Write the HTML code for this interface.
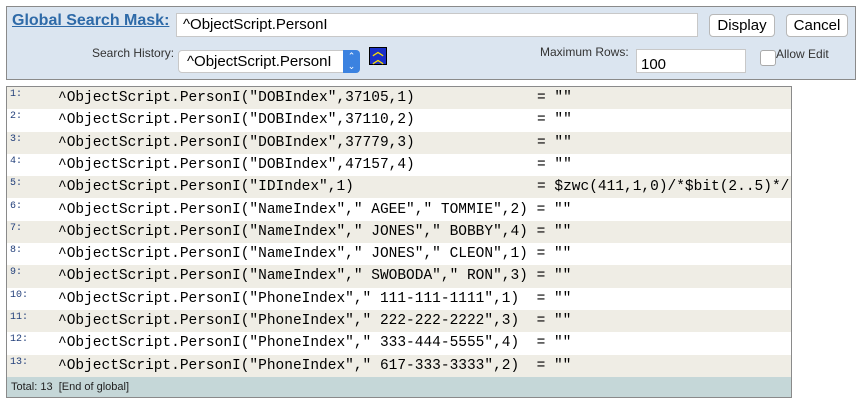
<!DOCTYPE html>
<html><head><style>
body{margin:0;width:864px;height:412px;background:#fff;font-family:"Liberation Sans",sans-serif;position:relative;overflow:hidden}
.a{position:absolute}
.panel{left:6px;top:6px;width:848px;height:72px;background:#dbe5f0;border:1px solid #8a8a8a}
.inp{background:#fff;border:1px solid #c8c8c8;font-size:15px;box-sizing:border-box;padding-left:6px;line-height:22px}
.btn{background:#fff;border:1px solid #b8b8b8;border-radius:4px;font-size:15px;text-align:center;line-height:21px;box-sizing:border-box}
.tbl{left:6px;top:86px;width:786px;height:312px;border:1px solid #8a8a8a;box-sizing:border-box}
.row{position:absolute;left:0;width:784px;height:22.3px;font-family:"Liberation Mono",monospace;font-size:14.5px;line-height:22px}
.row.o{background:#efede5}
.n{position:absolute;left:3px;top:-3px;font-size:10px;color:#223f7a}
.c{position:absolute;left:51px;white-space:pre}
.e{position:absolute;left:530px;white-space:pre}
</style></head><body>
<div class="a panel"></div>
<div class="a" style="left:12px;top:12px;font-size:16px;font-weight:bold;color:#2e6aa8;text-decoration:underline">Global Search Mask:</div>
<div class="a inp" style="left:176px;top:13px;width:522px;height:24px">^ObjectScript.PersonI</div>
<div class="a btn" style="left:709px;top:14px;width:66px;height:23px">Display</div>
<div class="a btn" style="left:786px;top:14px;width:62px;height:23px">Cancel</div>
<div class="a" style="left:92px;top:46px;font-size:12px;color:#333">Search History:</div>
<div class="a inp" style="left:178px;top:50px;width:182px;height:23px;border-radius:4px;padding-left:8px">^ObjectScript.PersonI</div>
<div class="a" style="left:343px;top:50px;width:17px;height:23px;background:#3b82e0;border-radius:0 4px 4px 0;color:#fff;font-size:9px;text-align:center;line-height:10px;padding-top:1px;box-sizing:border-box">⌃<br>⌄</div>
<div class="a" style="left:369px;top:47px;width:18px;height:18px;background:#1a2fc8;border:1px solid #000;box-sizing:border-box;color:#ffe000;font-size:11px;text-align:center;line-height:8px;font-weight:bold">︿<br>︿</div>
<div class="a" style="left:540px;top:45px;font-size:12px;color:#333">Maximum Rows:</div>
<div class="a inp" style="left:636px;top:49px;width:110px;height:24px;padding-top:4px;padding-left:4px">100</div>
<div class="a" style="left:760px;top:50px;width:14px;height:14px;background:#fff;border:1px solid #aaa;border-radius:3px"></div>
<div class="a" style="left:776px;top:47px;font-size:12px;color:#333">Allow Edit</div>
<div class="a tbl">
<div class="row o" style="top:0"><span class="n">1:</span><span class="c">^ObjectScript.PersonI("DOBIndex",37105,1)</span><span class="e">= ""</span></div>
<div class="row" style="top:22.3px"><span class="n">2:</span><span class="c">^ObjectScript.PersonI("DOBIndex",37110,2)</span><span class="e">= ""</span></div>
<div class="row o" style="top:44.6px"><span class="n">3:</span><span class="c">^ObjectScript.PersonI("DOBIndex",37779,3)</span><span class="e">= ""</span></div>
<div class="row" style="top:66.9px"><span class="n">4:</span><span class="c">^ObjectScript.PersonI("DOBIndex",47157,4)</span><span class="e">= ""</span></div>
<div class="row o" style="top:89.2px"><span class="n">5:</span><span class="c">^ObjectScript.PersonI("IDIndex",1)</span><span class="e">= $zwc(411,1,0)/*$bit(2..5)*/</span></div>
<div class="row" style="top:111.5px"><span class="n">6:</span><span class="c">^ObjectScript.PersonI("NameIndex"," AGEE"," TOMMIE",2) = ""</span></div>
<div class="row o" style="top:133.8px"><span class="n">7:</span><span class="c">^ObjectScript.PersonI("NameIndex"," JONES"," BOBBY",4) = ""</span></div>
<div class="row" style="top:156.1px"><span class="n">8:</span><span class="c">^ObjectScript.PersonI("NameIndex"," JONES"," CLEON",1) = ""</span></div>
<div class="row o" style="top:178.4px"><span class="n">9:</span><span class="c">^ObjectScript.PersonI("NameIndex"," SWOBODA"," RON",3) = ""</span></div>
<div class="row" style="top:200.7px"><span class="n">10:</span><span class="c">^ObjectScript.PersonI("PhoneIndex"," 111-111-1111",1)  = ""</span></div>
<div class="row o" style="top:223px"><span class="n">11:</span><span class="c">^ObjectScript.PersonI("PhoneIndex"," 222-222-2222",3)  = ""</span></div>
<div class="row" style="top:245.3px"><span class="n">12:</span><span class="c">^ObjectScript.PersonI("PhoneIndex"," 333-444-5555",4)  = ""</span></div>
<div class="row o" style="top:267.6px"><span class="n">13:</span><span class="c">^ObjectScript.PersonI("PhoneIndex"," 617-333-3333",2)  = ""</span></div>
<div class="a" style="left:0;top:290px;width:784px;height:20px;background:#c5d7d8;font-size:11px;line-height:20px;padding-left:4px;box-sizing:border-box;color:#222">Total: 13&nbsp; [End of global]</div>
</div>
</body></html>
